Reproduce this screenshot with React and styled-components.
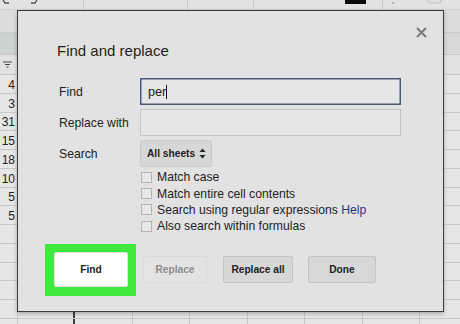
import React from 'react';
import styled, { createGlobalStyle } from 'styled-components';

const GlobalStyle = createGlobalStyle`
  html, body {
    margin: 0;
    padding: 0;
    background: #e4e4e4;
  }
  body {
    font-family: "Liberation Sans", Arial, sans-serif;
    color: #222;
  }
`;

const Page = styled.div`
  position: relative;
  width: 460px;
  height: 324px;
  overflow: hidden;
  background: #e4e4e4;
`;

/* ---------- spreadsheet behind the dialog ---------- */

const Sheet = styled.div`
  display: flex;
  flex-direction: column;
  width: 460px;
`;

const Toolbar = styled.div`
  height: 10px;
  display: flex;
  background: #e2e2e2;
  border-bottom: 1px solid #cfcfcf;
  box-sizing: border-box;
`;

const ToolSlot = styled.div`
  width: ${(p) => p.w}px;
  height: 10px;
  flex-shrink: 0;
  display: flex;
  align-items: flex-start;
  border-right: ${(p) => (p.sep ? '1px solid #c9c9c9' : 'none')};
  box-sizing: border-box;
`;

const ColorSwatch = styled.div`
  width: 21px;
  height: 4px;
  margin-left: ${(p) => p.ml}px;
  background: #0a0a0a;
`;

const Spacer = styled.div`
  height: 23px;
  background: #dcdcdc;
  border-bottom: 1px solid #cbcbcb;
  box-sizing: border-box;
`;

const Row = styled.div`
  display: grid;
  grid-template-columns: 18px 57px repeat(7, 57.5px);
  height: ${(p) => p.h}px;
  border-bottom: 1px solid #c9c9c9;
  box-sizing: border-box;
  background: ${(p) => p.bg || '#e6e6e6'};
`;

const Cell = styled.div`
  display: flex;
  align-items: ${(p) => (p.middle ? 'center' : 'flex-end')};
  justify-content: ${(p) => (p.center ? 'center' : 'flex-end')};
  padding: 0 2px 1px 0;
  box-sizing: border-box;
  font-size: 12px;
  color: #222;
  border-right: ${(p) => (p.frozen ? '2px solid #3c3c3c' : '1px solid #c9c9c9')};
  background: ${(p) => p.bg || 'transparent'};
`;

const HeadCell = styled(Cell)`
  align-items: center;
  justify-content: flex-start;
  padding-left: 4px;
`;

const FilterIcon = () => (
  <svg width="9" height="7" viewBox="0 0 9 7">
    <path d="M0 1h9M2 3.5h5M3.5 6h2" stroke="#444" strokeWidth="1.2" />
  </svg>
);

const values = ['4', '3', '31', '15', '18', '10', '5', '5', '', '', '', '', '', ''];

/* ---------- dialog ---------- */

const Dialog = styled.div`
  position: absolute;
  left: 17px;
  top: 10px;
  width: 427px;
  height: 302px;
  box-sizing: border-box;
  background: #e2e2e2;
  border: 1px solid #3a3a3a;
  box-shadow: 0 2px 4px rgba(0, 0, 0, 0.25);
  padding: 31px 0 0 39px;
`;

const Close = styled.button`
  position: absolute;
  top: 14px;
  right: 15px;
  width: 14px;
  height: 14px;
  padding: 0;
  border: none;
  background: transparent;
  display: flex;
  align-items: center;
  justify-content: center;
`;

const Title = styled.h2`
  margin: 0 0 19px;
  font-size: 15px;
  line-height: 17px;
  font-weight: normal;
  color: #1e1e1e;
`;

const Form = styled.div`
  display: grid;
  grid-template-columns: 81px 261px;
  row-gap: 4px;
  padding-left: 2px;
  font-size: 12.2px;
`;

const Label = styled.div`
  display: flex;
  align-items: center;
  color: #222;
`;

const Input = styled.div`
  height: 27px;
  box-sizing: border-box;
  border: 1px solid ${(p) => (p.focused ? '#4b5878' : '#c6c6c6')};
  box-shadow: ${(p) => (p.focused ? 'inset 0 0 0 0.5px #4b5878' : 'none')};
  background: #e6e6e6;
  display: flex;
  align-items: center;
  padding-left: 7px;
  font-size: 12.6px;
  color: #1a1a1a;
`;

const Caret = styled.span`
  display: inline-block;
  width: 1px;
  height: 14px;
  background: #111;
`;

const SelectBox = styled.div`
  width: 72px;
  height: 27px;
  box-sizing: border-box;
  display: flex;
  align-items: center;
  justify-content: space-between;
  padding: 0 5px 0 6px;
  background: #d7d7d7;
  border: 1px solid #cacaca;
  border-radius: 2px;
  font-size: 10.2px;
  font-weight: bold;
  color: #222;
`;

const Checks = styled.div`
  grid-column: 2;
  display: flex;
  flex-direction: column;
  margin-top: -2px;
`;

const CheckRow = styled.label`
  display: flex;
  align-items: center;
  height: 16.4px;
  gap: 5px;
  padding-left: 1px;
  font-size: 12.2px;
  color: #222;
  white-space: nowrap;
`;

const Box = styled.span`
  width: 11px;
  height: 11px;
  box-sizing: border-box;
  border: 1px solid #b4b4b4;
  background: #e8e8e8;
  flex-shrink: 0;
`;

const HelpLink = styled.a`
  color: #23398c;
  text-decoration: none;
`;

const Actions = styled.div`
  display: flex;
  align-items: center;
  margin: 9px 0 0 -12px;
`;

const Highlight = styled.div`
  width: 91px;
  height: 52px;
  box-sizing: border-box;
  padding: 8px 8px 9px 9px;
  background: #3ee83c;
  margin-right: 7px;
`;

const Button = styled.button`
  height: ${(p) => (p.primary ? '35px' : '27px')};
  width: ${(p) => p.w}px;
  margin-right: ${(p) => p.mr || 0}px;
  box-sizing: border-box;
  padding: 0;
  border-radius: 2px;
  font-family: "Liberation Sans", Arial, sans-serif;
  font-size: 10.2px;
  font-weight: bold;
  color: ${(p) => (p.disabled ? '#8b8b8b' : '#222')};
  background: ${(p) => {
    if (p.primary) return '#ffffff';
    if (p.disabled) return '#e3e3e3';
    return '#d7d7d7';
  }};
  border: 1px solid ${(p) => {
    if (p.primary) return '#e2e2e2';
    if (p.disabled) return '#dadada';
    return '#c4c4c4';
  }};
`;

function App() {
  return (
    <Page>
      <GlobalStyle />
      <Sheet>
        <Toolbar>
          <ToolSlot w={84} sep>
            <svg width="50" height="4" viewBox="0 0 50 4">
              <path d="M3 0l2 3h4M37 0l-2 3h-4" stroke="#555" strokeWidth="1.3" fill="none" />
            </svg>
          </ToolSlot>
          <ToolSlot w={104} sep />
          <ToolSlot w={66} sep />
          <ToolSlot w={129} sep>
            <ColorSwatch ml={91} />
          </ToolSlot>
          <ToolSlot w={77}>
            <svg width="60" height="10" viewBox="0 0 60 10">
              <circle cx="10" cy="3" r="0.8" fill="#777" />
              <rect x="45" y="-3" width="13" height="6" rx="2" fill="none" stroke="#bcbcbc" />
            </svg>
          </ToolSlot>
        </Toolbar>
        <Spacer />
        <Row h={22} bg="#d8d8d8">
          <HeadCell bg="#cbd3cf" />
          {Array.from({ length: 7 }).map((_, i) => (
            // eslint-disable-next-line react/no-array-index-key
            <HeadCell key={i} />
          ))}
          <HeadCell>K</HeadCell>
        </Row>
        <Row h={20} bg="#e2e2e2">
          <Cell center middle>
            <FilterIcon />
          </Cell>
        </Row>
        {values.map((v, i) => (
          // eslint-disable-next-line react/no-array-index-key
          <Row key={i} h={18.75}>
            <Cell>{v}</Cell>
            <Cell frozen />
            <Cell />
            <Cell />
            <Cell />
            <Cell />
            <Cell />
            <Cell />
            <Cell />
          </Row>
        ))}
      </Sheet>

      <Dialog>
        <Close aria-label="Close">
          <svg width="11" height="11" viewBox="0 0 11 11">
            <path d="M1 1l9 9M10 1l-9 9" stroke="#7a7a7a" strokeWidth="2" />
          </svg>
        </Close>
        <Title>Find and replace</Title>
        <Form>
          <Label>Find</Label>
          <Input focused>
            per
            <Caret />
          </Input>
          <Label>Replace with</Label>
          <Input />
          <Label>Search</Label>
          <div>
            <SelectBox>
              All sheets
              <svg width="7" height="11" viewBox="0 0 7 11">
                <path d="M3.5 0.5L6.5 4H0.5zM3.5 10.5L6.5 7H0.5z" fill="#222" />
              </svg>
            </SelectBox>
          </div>
          <Checks>
            <CheckRow>
              <Box />
              <span>Match case</span>
            </CheckRow>
            <CheckRow>
              <Box />
              <span>Match entire cell contents</span>
            </CheckRow>
            <CheckRow>
              <Box />
              <span>
                Search using regular expressions
                {' '}
                <HelpLink href="#">Help</HelpLink>
              </span>
            </CheckRow>
            <CheckRow>
              <Box />
              <span>Also search within formulas</span>
            </CheckRow>
          </Checks>
        </Form>
        <Actions>
          <Highlight>
            <Button primary w={74}>Find</Button>
          </Highlight>
          <Button disabled w={64} mr={16}>Replace</Button>
          <Button w={70} mr={15}>Replace all</Button>
          <Button w={68}>Done</Button>
        </Actions>
      </Dialog>
    </Page>
  );
}

export default App;
